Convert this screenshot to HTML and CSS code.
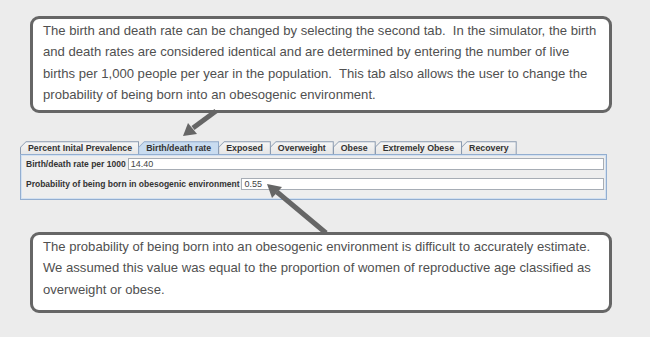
FILE: index.html
```html
<!DOCTYPE html>
<html>
<head>
<meta charset="utf-8">
<link rel="stylesheet" href="styles.css">
</head>
<body>
<div class="page">
  <div class="callout callout-top">
    The birth and death rate can be changed by selecting the second tab.&nbsp; In the simulator, the birth<br>
    and death rates are considered identical and are determined by entering the number of live<br>
    births per 1,000 people per year in the population.&nbsp; This tab also allows the user to change the<br>
    probability of being born into an obesogenic environment.
  </div>

  <div class="tabpane">
    <div class="tabs">
      <div class="tab"><span>Percent Inital Prevalence</span></div>
      <div class="tab selected"><span>Birth/death rate</span></div>
      <div class="tab"><span>Exposed</span></div>
      <div class="tab"><span>Overweight</span></div>
      <div class="tab"><span>Obese</span></div>
      <div class="tab"><span>Extremely Obese</span></div>
      <div class="tab"><span>Recovery</span></div>
    </div>
    <div class="panel">
      <div class="row">
        <label class="lbl">Birth/death rate per 1000</label>
        <div class="field">14.40</div>
      </div>
      <div class="row">
        <label class="lbl">Probability of being born in obesogenic environment</label>
        <div class="field">0.55</div>
      </div>
    </div>
  </div>

  <div class="callout callout-bottom">
    The probability of being born into an obesogenic environment is difficult to accurately estimate.<br>
    We assumed this value was equal to the proportion of women of reproductive age classified as<br>
    overweight or obese.
  </div>

  <svg class="arrows" width="650" height="337" viewBox="0 0 650 337">
    <line x1="216" y1="111" x2="193" y2="128" stroke="#666" stroke-width="5"/>
    <polygon points="183,136 197,134 188,123" fill="#666"/>
    <line x1="326" y1="233" x2="277" y2="192" stroke="#666" stroke-width="5"/>
    <polygon points="267,184 282,187 272,198" fill="#666"/>
  </svg>
</div>
</body>
</html>
```
FILE: styles.css
```css
html, body {
  margin: 0;
  padding: 0;
  background: #ececec;
}
.page {
  position: relative;
  width: 650px;
  height: 337px;
  padding-top: 16px;
  box-sizing: border-box;
  overflow: hidden;
}
.callout {
  margin: 0 38px 0 30px;
  background: #fff;
  border: 3px solid #666;
  border-radius: 9px;
  padding: 1px 10px 5px;
  font-family: "Liberation Sans", Arial, sans-serif;
  font-size: 13.1px;
  line-height: 21.3px;
  color: #505050;
  white-space: nowrap;
}
.callout-bottom {
  margin-top: 32px;
  padding-bottom: 10px;
}
.tabpane {
  margin: 28px 43px 0 20px;
  font-family: "Liberation Sans", Arial, sans-serif;
}
.tabs {
  display: flex;
  height: 13px;
  align-items: flex-end;
}
.tab {
  height: 13px;
  background: #8b9bb0;
  clip-path: polygon(0 6px, 6px 0, 100% 0, 100% 100%, 0 100%);
  margin-right: -1px;
  box-sizing: border-box;
  padding: 1px 1px 0 1px;
}
.tab span {
  display: block;
  height: 12px;
  background: linear-gradient(#f6f6f6, #e6e6e6);
  clip-path: polygon(0 5px, 5px 0, 100% 0, 100% 100%, 0 100%);
  font-size: 8.8px;
  font-weight: bold;
  line-height: 12px;
  color: #333;
  padding: 0 7px 0 7px;
  white-space: nowrap;
}
.tab:first-child span {
  padding: 0 6px 0 7px;
}
.tab.selected {
  background: #8fa9c9;
}
.tab.selected span {
  background: #c9dcf0;
}
.panel {
  background: #eeeeee;
  border: 1px solid #93aed0;
  box-shadow: inset 0 0 0 1px #d3e1f1;
  padding: 3px 2px 9px 5px;
  display: flex;
  flex-direction: column;
  gap: 8px;
}
.row {
  display: flex;
  align-items: center;
  gap: 2px;
  height: 12px;
}
.lbl {
  font-size: 8.5px;
  font-weight: bold;
  color: #333;
  white-space: nowrap;
}
.field {
  flex: 1;
  height: 12px;
  box-sizing: border-box;
  border: 1px solid #a7adb5;
  background: #fff;
  font-size: 9px;
  line-height: 10px;
  color: #444;
  padding-left: 2px;
}
.arrows {
  position: absolute;
  left: 0;
  top: 0;
}
```
